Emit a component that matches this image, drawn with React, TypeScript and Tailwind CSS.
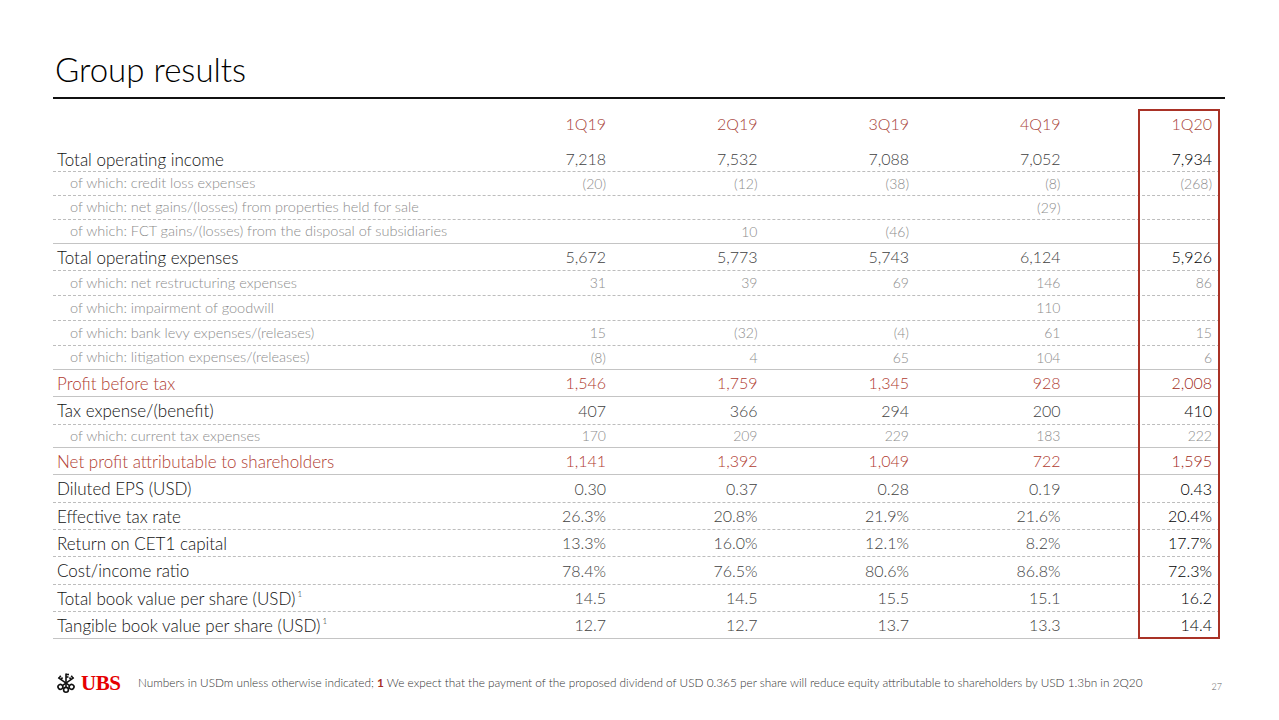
import React from "react";

type Row = {
  label: string;
  kind: "main" | "sub" | "red";
  vals: string[];
  h: string;
  border: "dashed" | "solid";
  sup?: boolean;
};

const rows: Row[] = [
  { label: "Total operating income", kind: "main", vals: ["7,218", "7,532", "7,088", "7,052", "7,934"], h: "h-[25px]", border: "dashed" },
  { label: "of which: credit loss expenses", kind: "sub", vals: ["(20)", "(12)", "(38)", "(8)", "(268)"], h: "h-[24px]", border: "dashed" },
  { label: "of which: net gains/(losses) from properties held for sale", kind: "sub", vals: ["", "", "", "(29)", ""], h: "h-[24px]", border: "dashed" },
  { label: "of which: FCT gains/(losses) from the disposal of subsidiaries", kind: "sub", vals: ["", "10", "(46)", "", ""], h: "h-[24px]", border: "solid" },
  { label: "Total operating expenses", kind: "main", vals: ["5,672", "5,773", "5,743", "6,124", "5,926"], h: "h-[27px]", border: "dashed" },
  { label: "of which: net restructuring expenses", kind: "sub", vals: ["31", "39", "69", "146", "86"], h: "h-[25px]", border: "dashed" },
  { label: "of which: impairment of goodwill", kind: "sub", vals: ["", "", "", "110", ""], h: "h-[25px]", border: "dashed" },
  { label: "of which: bank levy expenses/(releases)", kind: "sub", vals: ["15", "(32)", "(4)", "61", "15"], h: "h-[25px]", border: "dashed" },
  { label: "of which: litigation expenses/(releases)", kind: "sub", vals: ["(8)", "4", "65", "104", "6"], h: "h-[24px]", border: "solid" },
  { label: "Profit before tax", kind: "red", vals: ["1,546", "1,759", "1,345", "928", "2,008"], h: "h-[27px]", border: "solid" },
  { label: "Tax expense/(benefit)", kind: "main", vals: ["407", "366", "294", "200", "410"], h: "h-[28px]", border: "dashed" },
  { label: "of which: current tax expenses", kind: "sub", vals: ["170", "209", "229", "183", "222"], h: "h-[23px]", border: "solid" },
  { label: "Net profit attributable to shareholders", kind: "red", vals: ["1,141", "1,392", "1,049", "722", "1,595"], h: "h-[27px]", border: "solid" },
  { label: "Diluted EPS (USD)", kind: "main", vals: ["0.30", "0.37", "0.28", "0.19", "0.43"], h: "h-[28px]", border: "dashed" },
  { label: "Effective tax rate", kind: "main", vals: ["26.3%", "20.8%", "21.9%", "21.6%", "20.4%"], h: "h-[27px]", border: "dashed" },
  { label: "Return on CET1 capital", kind: "main", vals: ["13.3%", "16.0%", "12.1%", "8.2%", "17.7%"], h: "h-[27px]", border: "dashed" },
  { label: "Cost/income ratio", kind: "main", vals: ["78.4%", "76.5%", "80.6%", "86.8%", "72.3%"], h: "h-[28px]", border: "dashed" },
  { label: "Total book value per share (USD)", kind: "main", sup: true, vals: ["14.5", "14.5", "15.5", "15.1", "16.2"], h: "h-[27px]", border: "dashed" },
  { label: "Tangible book value per share (USD)", kind: "main", sup: true, vals: ["12.7", "12.7", "13.7", "13.3", "14.4"], h: "h-[27px]", border: "solid" },
];

const headers = ["1Q19", "2Q19", "3Q19", "4Q19", "1Q20"];

function Key({ angle, flip }: { angle: number; flip?: boolean }) {
  const d = flip ? -1 : 1;
  return (
    <g transform={`rotate(${angle} 11 11)`}>
      <line x1="11" y1="1.5" x2="11" y2="15" />
      <line x1="11" y1="2.5" x2={11 + 3 * d} y2="2.5" />
      <line x1="11" y1="5" x2={11 + 2.5 * d} y2="5" />
      <circle cx="11" cy="17.8" r="2.4" />
    </g>
  );
}

function Keys() {
  return (
    <svg width="22" height="22" viewBox="0 0 22 22" fill="none" stroke="#111" strokeWidth="1.6">
      <Key angle={0} />
      <Key angle={-55} />
      <Key angle={55} flip />
    </svg>
  );
}

export default function App() {
  return (
    <div className="w-[1279px] h-[720px] bg-white overflow-hidden font-['Lato',sans-serif] font-light text-[#1a1a1a]">
      <div className="pl-[53px] pr-[54px]">
        <div className="h-[99px] flex items-end border-b-2 border-[#111] pb-[8px]">
          <h1 className="text-[33px] leading-[40px] font-light text-black pl-[2px]">Group results</h1>
        </div>
      </div>
      <div className="pl-[53px] w-[1220px] relative">
        <div className="absolute left-[1138px] top-[10px] w-[82px] h-[530px] border-2 border-[#a93226]" />
        <div className="grid grid-cols-[409.5px_repeat(5,151.5px)] h-[48px] items-center pt-[1px] text-[16px] text-[#a8443a]">
          <div />
          {headers.map((h) => (
            <div key={h} className="text-right pr-[8px]">{h}</div>
          ))}
        </div>
        {rows.map((r) => {
          const border = r.border === "dashed" ? "border-dashed border-[#bdbdbd]" : "border-solid border-[#c4c4c4]";
          const isSub = r.kind === "sub";
          const labelCls = isSub
            ? "pl-[17px] text-[14.5px] text-[#8c8c8c]"
            : r.kind === "red"
            ? "pl-[4px] text-[17px] text-[#b03c31]"
            : "pl-[4px] text-[17px] text-[#111]";
          return (
            <div key={r.label} className={`grid grid-cols-[409.5px_repeat(5,151.5px)] items-center border-b ${border} ${r.h}`}>
              <div className={`${labelCls} whitespace-nowrap leading-none`}>
                {r.label}
                {r.sup && <sup className="text-[8px] relative top-[-8px] ml-[2px]">1</sup>}
              </div>
              {r.vals.map((v, i) => {
                const last = i === 4;
                let cls = "";
                if (isSub) cls = "text-[14px] text-[#8c8c8c]";
                else if (r.kind === "red") cls = last ? "text-[16px] text-[#a02a20]" : "text-[16px] text-[#b03c31]";
                else cls = last ? "text-[16px] text-black" : "text-[16px] text-[#3f3f3f]";
                return (
                  <div key={i} className={`text-right pr-[8px] leading-none ${cls}`}>{v}</div>
                );
              })}
            </div>
          );
        })}
      </div>
      <div className="flex items-center pl-[55px] pr-[57px] mt-[32px] h-[24px]">
        <div className="flex items-center gap-[4px] w-[83px]">
          <Keys />
          <span className="font-['Liberation_Serif',serif] font-bold text-[21px] leading-none text-[#e60000] tracking-[-0.5px]">UBS</span>
        </div>
        <div className="text-[11.8px] text-[#333] font-light whitespace-nowrap">
          Numbers in USDm unless otherwise indicated; <span className="font-bold text-[#a52e24]">1</span> We expect that the payment of the proposed dividend of USD 0.365 per share will reduce equity attributable to shareholders by USD 1.3bn in 2Q20
        </div>
        <div className="ml-auto text-[9px] text-[#666] mt-[8px]">27</div>
      </div>
    </div>
  );
}
